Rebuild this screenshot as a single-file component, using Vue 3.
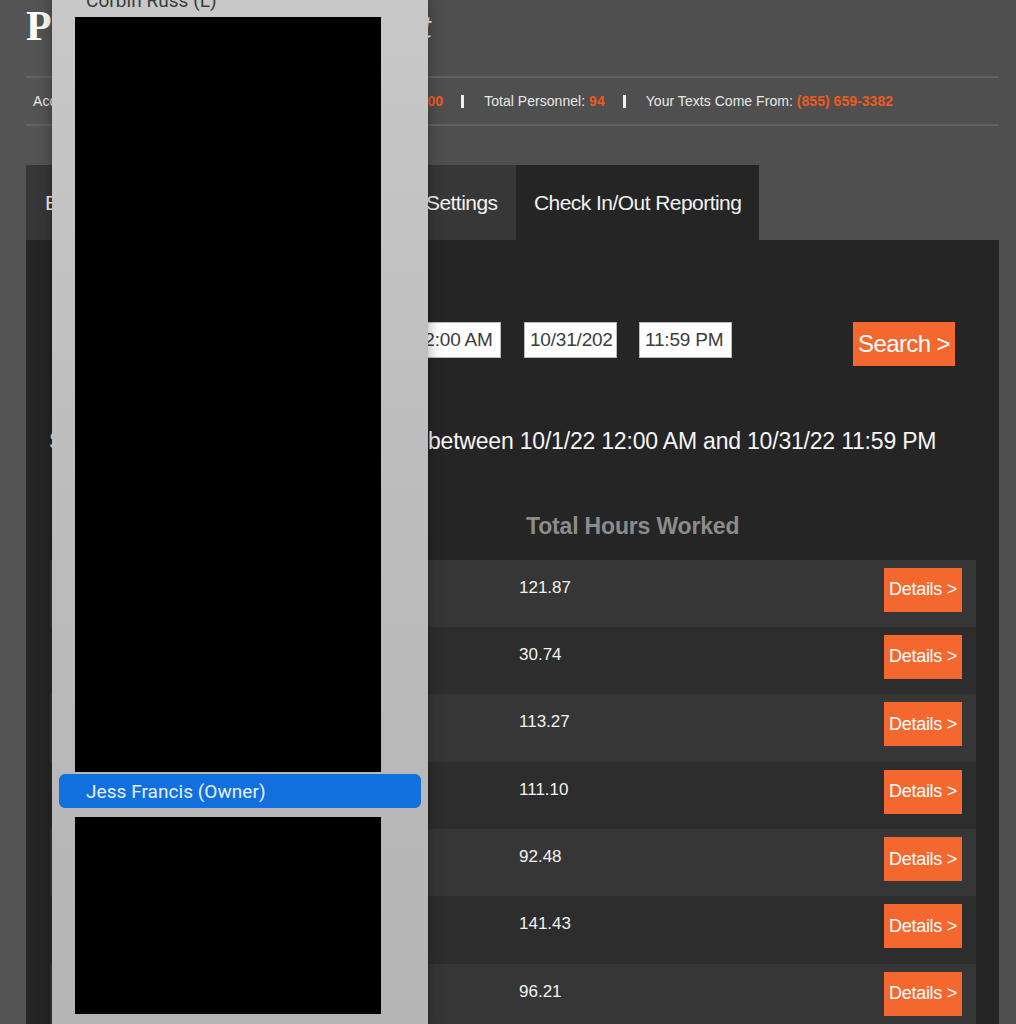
<script setup>
const rows = [
  { hours: '121.87', shade: true },
  { hours: '30.74', shade: false },
  { hours: '113.27', shade: true },
  { hours: '111.10', shade: false },
  { hours: '92.48', shade: true },
  { hours: '141.43', shade: false },
  { hours: '96.21', shade: true },
]
</script>

<template>
  <div class="page">
    <header class="brand">
      <span class="logo">P</span>
      <span class="logo-end">t</span>
    </header>

    <div class="stats">
      <span class="stat-acc">Acc</span>
      <span class="accent stat-a">00</span>
      <span class="bar"></span>
      <span>Total Personnel: <span class="accent">94</span></span>
      <span class="bar"></span>
      <span>Your Texts Come From: <span class="accent">(855) 659-3382</span></span>
    </div>

    <nav class="tabs">
      <div class="tab tab-one">E</div>
      <div class="tab tab-two">Settings</div>
      <div class="tab active">Check In/Out Reporting</div>
    </nav>

    <main class="panel">
      <div class="filters">
        <input class="field f-time1" readonly value="12:00 AM" />
        <input class="field f-date" readonly value="10/31/2022" />
        <input class="field f-time2" readonly value="11:59 PM" />
        <button class="search">Search &gt;</button>
      </div>

      <p class="summary"><span class="s-first">S</span><span>between 10/1/22 12:00 AM and 10/31/22 11:59 PM</span></p>

      <div class="heading">Total Hours Worked</div>

      <div class="rows">
        <div v-for="r in rows" :key="r.hours" class="row" :class="{ shade: r.shade }">
          <span class="hours">{{ r.hours }}</span>
          <button class="details">Details &gt;</button>
        </div>
      </div>
    </main>

    <aside class="menu">
      <div class="opt opt-top">Corbin Russ (L)</div>
      <div class="redact r-one"></div>
      <div class="opt selected">Jess Francis (Owner)</div>
      <div class="redact r-two"></div>
    </aside>
  </div>
</template>

<style>
html, body { margin: 0; background: #4f4f4f; overflow: hidden; }
</style>

<style scoped>
.page {
  position: relative;
  width: 1016px;
  height: 1024px;
  overflow: hidden;
  box-sizing: border-box;
  padding: 0 17px 0 26px;
  background: linear-gradient(90deg, #555 0, #4f4f4f 160px, #4f4f4f 100%);
  font-family: "Liberation Sans", Arial, sans-serif;
  color: #f2f2f2;
}
.brand {
  height: 76px;
  display: flex;
  border-bottom: 2px solid #626262;
}
.logo {
  font-family: "Liberation Serif", serif;
  font-weight: 700;
  font-size: 42px;
  line-height: 52px;
  color: #fff;
}
.logo-end {
  margin-left: 369px;
  font-family: "Liberation Serif", serif;
  font-style: italic;
  font-weight: 700;
  font-size: 36px;
  line-height: 52px;
  color: #eee;
}
.stats {
  height: 46px;
  display: flex;
  align-items: center;
  font-size: 14px;
  letter-spacing: .04px;
  border-bottom: 2px solid #626262;
  color: #e8e8e8;
}
.stat-acc { margin-left: 7px; }
.stat-a { margin-left: 371px; }
.bar {
  width: 3px;
  height: 13px;
  background: #f0f0f0;
  margin: 0 20px 0 18px;
}
.accent { color: #ef5a1f; font-weight: 700; }
.tabs {
  display: flex;
  height: 75px;
  margin-top: 39px;
  width: 733px;
  background: #373737;
}
.tab {
  display: flex;
  align-items: center;
  font-size: 21px;
  letter-spacing: -.55px;
  white-space: nowrap;
  box-sizing: border-box;
}
.tab-one { width: 400px; padding-left: 19px; }
.tab-two { width: 90px; }
.active {
  width: 243px;
  padding-left: 18px;
  background: #252525;
}
.panel {
  height: 784px;
  background: #252525;
  box-sizing: border-box;
  padding-top: 82px;
}
.filters {
  height: 44px;
  display: flex;
  align-items: flex-start;
}
.field {
  width: 93px;
  height: 36px;
  margin: 0;
  background: #fff;
  color: #3c3c3c;
  font: 19px "Liberation Sans", Arial, sans-serif;
  letter-spacing: -.2px;
  box-sizing: border-box;
  border: 1px solid #bbb;
  border-radius: 0;
  outline: none;
  padding: 0 4px 0 5px;
}
.f-time1 { margin-left: 382px; }
.f-date { margin-left: 23px; }
.f-time2 { margin-left: 22px; }
.search {
  margin-left: 121px;
  width: 102px;
  height: 44px;
  border: 0;
  padding: 0;
  background: #f4682f;
  color: #fff;
  font: 24px "Liberation Sans", Arial, sans-serif;
  letter-spacing: -.6px;
}
.summary {
  margin: 0;
  padding-top: 60px;
  height: 30px;
  display: flex;
  font-size: 23px;
  line-height: 30px;
  letter-spacing: -.2px;
  color: #f5f5f5;
}
.s-first { margin-left: 23px; width: 379px; flex: none; }
.heading {
  margin: 55px 0 0 500px;
  font-size: 23px;
  font-weight: 700;
  line-height: 30px;
  letter-spacing: -.17px;
  color: #8c8c8c;
}
.rows {
  margin: 18.5px 0 0 24px;
  width: 926px;
}
.row {
  height: 67.4px;
  display: flex;
  justify-content: space-between;
  align-items: flex-start;
  box-sizing: border-box;
  padding: 8px 14px 0 469px;
  background: #2d2d2d;
}
.shade { background: #363636; }
.hours {
  margin-top: 9px;
  font-size: 17px;
  line-height: 22px;
  color: #f2f2f2;
}
.details {
  width: 78px;
  height: 44px;
  border: 0;
  padding: 0;
  background: #f4682f;
  color: #fff;
  font: 18px "Liberation Sans", Arial, sans-serif;
  letter-spacing: -.3px;
}
.menu {
  position: absolute;
  left: 52px;
  top: -6px;
  width: 376px;
  height: 1040px;
  box-sizing: border-box;
  background: linear-gradient(180deg, #c8c8c8 0, #bcbcbc 50%, #b5b5b5 100%);
  padding: 0 7px;
  display: flex;
  flex-direction: column;
  box-shadow: 0 0 14px rgba(0, 0, 0, .35);
}
.opt {
  font-family: "Roboto", "Liberation Sans", sans-serif;
  font-size: 19px;
  letter-spacing: .05px;
  line-height: 24px;
  padding-left: 27px;
  color: #3a3a3a;
  white-space: nowrap;
}
.opt-top { height: 23px; line-height: 14px; }
.redact { background: #000; margin-left: 16px; width: 306px; flex: none; }
.r-one { height: 754.5px; }
.selected {
  flex: none;
  height: 34px;
  line-height: 36px;
  margin-top: 2.5px;
  border-radius: 6px;
  background: #1170dd;
  color: #e6f0ff;
}
.r-two { height: 197px; margin-top: 9px; }
</style>
